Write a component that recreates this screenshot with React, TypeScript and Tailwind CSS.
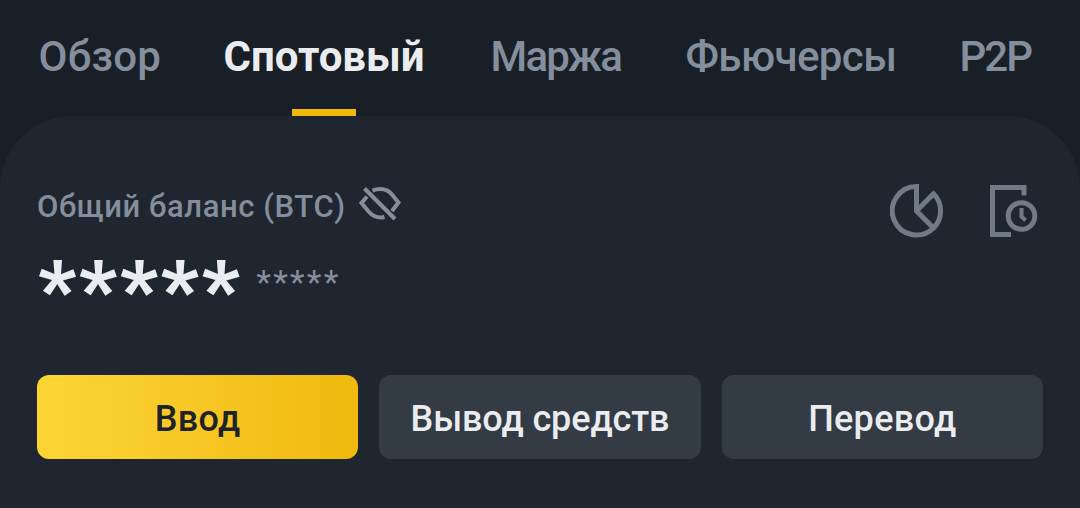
import React from 'react';

interface Tab {
  label: string;
  active?: boolean;
  className: string;
}

const tabs: Tab[] = [
  { label: 'Обзор', className: 'tracking-[0.2px]' },
  { label: 'Спотовый', active: true, className: 'tracking-[0px]' },
  { label: 'Маржа', className: 'tracking-[-1.8px]' },
  { label: 'Фьючерсы', className: 'tracking-[-0.6px]' },
  { label: 'P2P', className: 'tracking-[-2px]' },
];

interface Action {
  label: string;
  className: string;
}

const actions: Action[] = [
  { label: 'Ввод', className: 'bg-linear-to-r from-[#fcd535] to-[#f0b90b] text-[#1e2329] tracking-[0.3px]' },
  { label: 'Вывод средств', className: 'bg-[#333b45] text-[#eaecef] tracking-[-0.1px]' },
  { label: 'Перевод', className: 'bg-[#333b45] text-[#eaecef] tracking-[0.3px]' },
];

function HiddenIcon() {
  return (
    <svg width="42" height="36" viewBox="0 0 42 36" fill="none" stroke="currentColor" strokeWidth="4">
      <path d="M5.5 2.5 36 33" />
      <path d="M13.5 4.500C21 2 28 2.500 33 8.500l6.500 8-6.500 8.500" />
      <path d="M8 10.500 2.500 17l7 8.500c4.500 5 10 7 16 5.500" />
    </svg>
  );
}

function PieIcon() {
  return (
    <svg width="54" height="54" viewBox="0 0 54 54" fill="none" stroke="currentColor" strokeWidth="5">
      <path d="M26.500 2.600A24.200 24.200 0 1 0 43.500 44L26.500 27Z" />
      <path d="M26.500 27 43.500 9.800a24.200 24.200 0 0 1 0 34.200" />
    </svg>
  );
}

function HistoryIcon() {
  return (
    <svg width="50" height="54" viewBox="0 0 50 54" fill="none" stroke="currentColor" strokeWidth="5">
      <path d="M35 11.500V3.500H3.500V50.500H22" />
      <circle cx="32.500" cy="32" r="13.300" />
      <path d="M32.500 24v8.500l4 4" strokeWidth="4" />
    </svg>
  );
}

export default function App() {
  return (
    <div className="flex h-[508px] w-[1080px] flex-col overflow-hidden bg-[#181f26] font-[Roboto,sans-serif]">
      <nav className="grid h-[116px] grid-cols-[185px_267px_195px_274px_1fr] pl-[38.5px]">
        {tabs.map((tab) => (
          <div key={tab.label} className="flex flex-col items-start justify-between pt-[33px]">
            <span
              className={`text-[42px] leading-[48px] whitespace-nowrap ${tab.className} ${
                tab.active ? 'font-bold text-[#eaecef]' : 'font-medium text-[#848e9c]'
              }`}
            >
              {tab.label}
            </span>
            {tab.active && <div className="ml-[68.5px] h-[7px] w-16 bg-[#f0b90b]" />}
          </div>
        ))}
      </nav>

      <main className="flex flex-1 flex-col rounded-t-[72px] bg-[#1f262f] px-[37px] pt-[68px]">
        <div className="flex justify-between text-[#717a87]">
          <div className="flex h-11 items-center gap-3.5">
            <span className="w-[308px] pt-0.5 text-[31px] leading-9 font-medium tracking-[0.58px] whitespace-nowrap text-[#848e9c]">
              Общий баланс (BTC)
            </span>
            <span className="pb-1 text-[#848e9c]">
              <HiddenIcon />
            </span>
          </div>
          <div className="mr-1 flex gap-[45px]">
            <PieIcon />
            <HistoryIcon />
          </div>
        </div>

        <div className="mt-2 flex h-20 items-start">
          <span className="-mt-0.5 ml-px text-[82px] leading-[92px] font-black tracking-[2.7px] text-[#eaecef]">
            *****
          </span>
          <span className="mt-4 ml-3.5 text-[34px] leading-10 tracking-[2.2px] text-[#848e9c]">*****</span>
        </div>

        <div className="mt-[49px] grid grid-cols-3 gap-[21px]">
          {actions.map((action) => (
            <button
              key={action.label}
              className={`h-[84px] rounded-xl pt-1 text-[36px] font-medium whitespace-nowrap ${action.className}`}
            >
              {action.label}
            </button>
          ))}
        </div>
      </main>
    </div>
  );
}
